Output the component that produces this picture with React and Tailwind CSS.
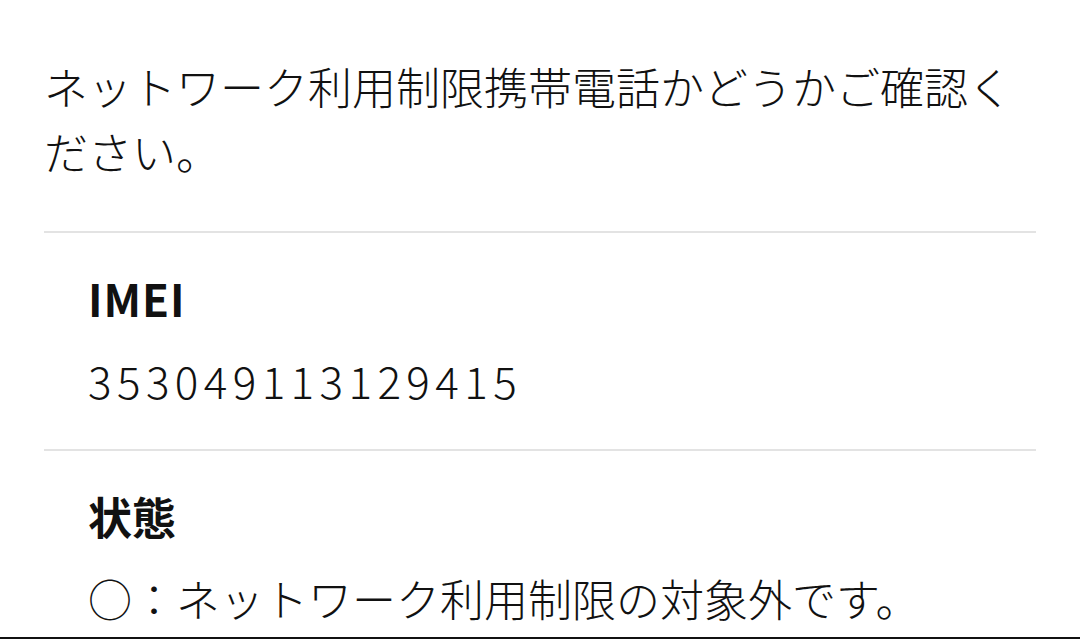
import React from 'react';

const font = { fontFamily: '"Noto Sans CJK JP", "Noto Sans", sans-serif' };

// Label / value rows under the intro text
const rows = [
  { label: 'IMEI', value: '353049113129415', digits: true },
  { label: '状態', value: '○：ネットワーク利用制限の対象外です。' },
];

const Row = ({ label, value, digits, last }) => (
  <div
    className={`border-t-2 border-[#e3e3e3] px-[44px] pt-[33px] ${
      last ? 'pb-0' : 'pb-[36px]'
    }`}
  >
    <div
      className={`text-[44px] leading-[65px] font-bold text-[#111] ${
        digits ? 'tracking-[1px]' : ''
      }`}
    >
      {label}
    </div>
    <div
      className={`mt-[17px] text-[44px] leading-[65px] font-light text-[#111] ${
        digits ? 'tracking-[5.4px]' : ''
      }`}
    >
      {value}
    </div>
  </div>
);

export default function App() {
  return (
    <div className="h-[639px] w-[1080px] bg-white flex flex-col overflow-hidden" style={font}>
      <div className="flex-1 overflow-hidden px-[44px] pt-[54px]">
        {/* Intro */}
        <p className="text-[44px] leading-[65px] font-light text-[#111] pb-[47px]">
          ネットワーク利用制限携帯電話かどうかご確認ください。
        </p>

        {rows.map((r, i) => (
          <Row key={r.label} {...r} last={i === rows.length - 1} />
        ))}
      </div>

      <div className="shrink-0 h-[2px] bg-[#111]" />
    </div>
  );
}
